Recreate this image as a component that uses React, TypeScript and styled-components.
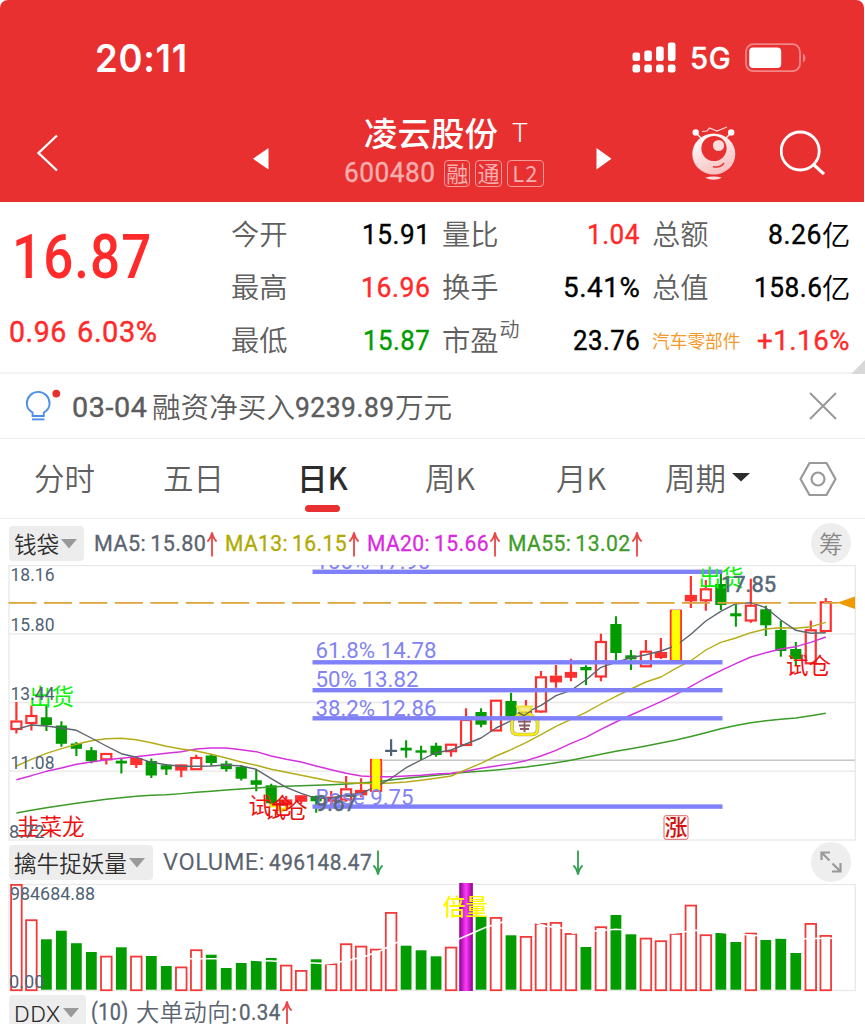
import React, { useLayoutEffect, useRef, useState } from 'react';
import styled, { createGlobalStyle } from 'styled-components';

const GlobalStyle = createGlobalStyle`
  * { box-sizing: border-box; }
  html, body { margin: 0; padding: 0; background: #fff; }
  body { overflow: hidden; font-family: 'Noto Sans CJK SC', sans-serif; }
  svg { display: block; }
`;

const DIN = `Roboto, 'Noto Sans CJK SC', sans-serif`;

/* ---------- text squeezed to the narrow widths of the numeric face ---------- */

const FitBox = styled.span<{ $w: number }>`
  display: inline-block;
  flex: none;
  width: ${(p) => p.$w}px;
  white-space: pre;
`;
const FitInner = styled.span<{ $size: number; $weight: number; $font: string; $color: string }>`
  display: inline-block;
  transform-origin: 0 50%;
  font-family: ${(p) => p.$font};
  font-size: ${(p) => p.$size}px;
  font-weight: ${(p) => p.$weight};
  color: ${(p) => p.$color};
  line-height: 1;
  letter-spacing: 0.02em;
  word-spacing: -0.08em;
  -webkit-text-stroke: ${(p) => (p.$weight === 450 ? p.$size * 0.014 : 0)}px currentColor;
`;

type FitProps = {
  w: number;
  size: number;
  weight?: number;
  font?: string;
  color?: string;
  children: string;
};

function Fit({ w, size, weight = 450, font = DIN, color = 'inherit', children }: FitProps) {
  const ref = useRef<HTMLSpanElement>(null);
  const [scale, setScale] = useState(1);
  useLayoutEffect(() => {
    if (ref.current && ref.current.offsetWidth) setScale(w / ref.current.offsetWidth);
  }, [w, size, children]);
  return (
    <FitBox $w={w}>
      <FitInner
        ref={ref}
        $size={size}
        $weight={weight}
        $font={font}
        $color={color}
        style={{ transform: `scaleX(${scale})` }}
      >
        {children}
      </FitInner>
    </FitBox>
  );
}

/* ---------- page and header ---------- */

const Page = styled.main`
  width: 865px;
  height: 1024px;
  overflow: hidden;
  background: #fff;
`;

const Header = styled.header`
  width: 864.4px;
  height: 202px;
  background: #e83030;
  color: #fff;
  border-radius: 8px 8px 0 0;
`;

const StatusBar = styled.div`
  display: flex;
  justify-content: space-between;
  align-items: center;
  height: 116px;
  padding: 0 58px 0 95px;
`;

const StatusRight = styled.div`
  display: flex;
  align-items: center;
  gap: 14px;
`;

const NavBar = styled.nav`
  display: grid;
  grid-template-columns: 217px 91px 252px 96px 88px 1fr;
  height: 86px;
  padding-left: 36px;
`;

const NavIcon = styled.div<{ $top: number }>`
  padding-top: ${(p) => p.$top}px;
`;

const TitleBlock = styled.div`
  width: 200px;
`;
const TitleLine = styled.div`
  display: flex;
  align-items: flex-start;
  height: 36px;
  padding-left: 20px;
  gap: 14px;
  font-size: 33.5px;
  font-weight: 500;
  line-height: 32px;
`;
const Flag = styled.span`
  display: flex;
  padding-top: 3px;
  font-size: 25px;
  line-height: 1;
`;
const CodeLine = styled.div`
  display: flex;
  align-items: center;
  height: 40px;
  padding-top: 2px;
  color: #f8aeae;
`;
const Tag = styled.span<{ $w: number }>`
  width: ${(p) => p.$w}px;
  height: 27px;
  margin-left: 5px;
  border: 1px solid #f39a9a;
  border-radius: 4px;
  font-size: 22px;
  font-weight: 400;
  line-height: 23px;
  text-align: center;
  letter-spacing: ${(p) => (p.$w > 30 ? 1 : 0)}px;
`;

/* ---------- quote ---------- */

const Quote = styled.section`
  position: relative;
  display: grid;
  grid-template-columns: 231px 199px 12px 198px 12px 198px;
  height: 172px;
  border-bottom: 2px solid #f3f3f3;
`;
const PriceBlock = styled.div`
  color: #ff2a2a;
`;
const BigPrice = styled.div`
  height: 109px;
  padding: 26px 0 0 12px;
`;
const ChangeLine = styled.div`
  display: flex;
  gap: 10px;
  padding: 7px 0 0 9px;
`;
const Stats = styled.div`
  padding-top: 5px;
`;
const Stat = styled.div`
  display: flex;
  justify-content: space-between;
  align-items: center;
  height: 53px;
`;
const StatValue = styled.span<{ $color?: string }>`
  display: flex;
  align-items: center;
  padding-top: 4px;
  color: ${(p) => p.$color || '#000'};
`;
const Unit = styled.span`
  width: 28px;
  margin-top: -3px;
  font-size: 28.3px;
  font-weight: 350;
  line-height: 1;
`;
const StatLabel = styled.span<{ $sector?: boolean }>`
  font-size: ${(p) => (p.$sector ? 17.7 : 28.3)}px;
  font-weight: ${(p) => (p.$sector ? 400 : 350)};
  color: ${(p) => (p.$sector ? '#f49a2c' : '#606060')};
  line-height: 1;
  padding-top: ${(p) => (p.$sector ? 2 : 0)}px;
`;
const Sup = styled.sup`
  font-size: 20px;
  line-height: 0;
  vertical-align: 14px;
  margin-left: 1px;
`;
const Corner = styled.i`
  position: absolute;
  right: 0;
  bottom: -2px;
  border-style: solid;
  border-width: 0 0 14px 14px;
  border-color: transparent transparent #d8d8d8 transparent;
`;

/* ---------- notice and tabs ---------- */

const Notice = styled.section`
  display: flex;
  align-items: center;
  height: 65px;
  padding: 0 28px 0 25px;
  border-bottom: 1px solid #ececec;
  color: #5c5c5c;
`;
const NoticeText = styled.div`
  display: flex;
  align-items: center;
  flex: 1;
  margin-left: 10px;
`;
const NoticeNum = styled.span`
  display: flex;
  padding-top: 3px;
`;
const NoticeCn = styled.span`
  font-size: 28.6px;
  font-weight: 350;
  line-height: 1;
`;

const Tabs = styled.section`
  display: grid;
  grid-template-columns: 129px 135px 127px 131px 109px 134px 1fr;
  align-items: center;
  height: 80px;
  padding-left: 34px;
  border-bottom: 1px solid #ececec;
`;
const Tab = styled.div<{ $active?: boolean }>`
  position: relative;
  display: flex;
  align-items: center;
  width: max-content;
  gap: 6px;
  margin: ${(p) => (p.$active ? '-3px 0 0 -1px' : '-3px 0 0')};
  font-size: 30.5px;
  font-weight: ${(p) => (p.$active ? 500 : 350)};
  color: ${(p) => (p.$active ? '#2c2c2c' : '#606060')};
  line-height: 44px;
  &::after {
    content: '';
    display: ${(p) => (p.$active ? 'block' : 'none')};
    position: absolute;
    left: 8px;
    bottom: -12.5px;
    width: 35px;
    height: 7px;
    border-radius: 4px;
    background: #e83030;
  }
`;

/* ---------- indicator bars ---------- */

const Bar = styled.div<{ $h: number; $top: number }>`
  display: flex;
  align-items: flex-start;
  height: ${(p) => p.$h}px;
  padding: ${(p) => p.$top}px 14px 0 9px;
`;
const Pill = styled.div<{ $w: number }>`
  display: flex;
  align-items: center;
  flex: none;
  gap: 2px;
  width: ${(p) => p.$w}px;
  height: 35px;
  padding-left: 5px;
  border-radius: 4px;
  background: #ededed;
  color: #2d2d2d;
  font-size: 22.6px;
  font-weight: 350;
  line-height: 34px;
  white-space: nowrap;
`;
const Readings = styled.div<{ $gap: number; $left?: number }>`
  display: flex;
  align-items: center;
  flex: 1;
  height: 36px;
  margin-left: ${(p) => p.$left ?? 10}px;
  gap: ${(p) => p.$gap}px;
`;
const Reading = styled.div<{ $color: string }>`
  display: flex;
  align-items: center;
  color: ${(p) => p.$color};
`;
const Round = styled.div`
  display: flex;
  align-items: center;
  justify-content: center;
  width: 40px;
  height: 40px;
  margin-top: -3px;
  border-radius: 50%;
  background: #eee;
  color: #888;
  font-size: 24px;
  font-weight: 350;
  line-height: 1;
`;
const Spacer = styled.span<{ $w: number }>`
  width: ${(p) => p.$w}px;
`;

function Caret({ color, w = 16, h = 10 }: { color: string; w?: number; h?: number }) {
  return (
    <svg width={w} height={h} viewBox="0 0 16 10" preserveAspectRatio="none">
      <path d="M0 0H16L8 9.5Z" fill={color} />
    </svg>
  );
}

function Arrow({ up }: { up?: boolean }) {
  return (
    <svg width="12" height="26" viewBox="0 0 12 26">
      <g
        fill="none"
        stroke={up ? '#e94545' : '#2f9e4f'}
        strokeWidth="1.8"
        transform={up ? undefined : 'rotate(180 6 13)'}
      >
        <path d="M6 2V25.5" />
        <path d="M1.4 10.5Q4.8 7.5 6 1.5Q7.2 7.5 10.6 10.5" />
      </g>
    </svg>
  );
}

/* ---------- candle data ---------- */

const X0 = 16.4;
const STEP = 14.988;
const cx = (i: number) => X0 + STEP * i;

type Kind = 'r' | 'g' | 'y' | 'x';
type Candle = [Kind, number, number, number, number];

// kind, high, body top, body bottom, low
const candles: Candle[] = [
  ['r', 702, 720.5, 729, 733.5], ['r', 705.5, 715, 723, 730.5], ['g', 705.5, 717.3, 725, 731],
  ['g', 721.3, 725.5, 743.8, 746.7], ['g', 742, 743.5, 748.8, 756], ['g', 747, 750.2, 761.2, 763.3],
  ['r', 753, 753, 759.3, 764.5], ['g', 759, 760.7, 763.5, 773.5], ['r', 757, 758, 764, 768],
  ['g', 758.5, 761, 775.5, 778], ['g', 764, 765.2, 769.5, 775], ['r', 764, 764.5, 769.5, 777.3],
  ['r', 754.8, 757, 769.2, 770], ['g', 754.3, 755.5, 763, 765.7], ['g', 760.7, 763.5, 769.2, 771.7],
  ['g', 765, 767, 778.7, 780.5], ['g', 770, 780.3, 784.8, 791.3], ['g', 783.7, 785.3, 803.3, 804.5],
  ['r', 796, 799.5, 804.5, 808], ['r', 795, 795.3, 800.7, 804], ['g', 795.5, 796, 801.3, 812.7],
  ['r', 791, 796.7, 800.7, 805], ['r', 776, 788.3, 799.5, 801.7], ['r', 778.3, 790, 794.3, 797.3],
  ['y', 759.3, 759.3, 790.5, 790.5], ['x', 739.3, 749.8, 751.8, 756], ['g', 740.3, 747.7, 750.5, 757.7],
  ['g', 745.7, 750.3, 752.7, 760], ['g', 742.7, 745.7, 755, 756.7], ['r', 743.7, 743.7, 751.2, 756.7],
  ['r', 708.3, 719, 745, 745], ['g', 708.3, 712, 724.7, 727.3], ['r', 699.7, 699.7, 730.5, 730.5],
  ['g', 692.7, 701, 716.7, 716.7], ['r', 700, 711, 716, 718], ['r', 671, 676.3, 711.5, 712.7],
  ['r', 665, 675.7, 681.3, 687.7], ['r', 658.7, 672, 676.7, 681.3], ['g', 665.3, 667, 670.3, 685],
  ['r', 633.7, 641, 676.5, 681.3], ['g', 616.3, 624, 653, 660], ['g', 650, 655.3, 659.3, 670],
  ['r', 640, 650.7, 666.3, 666.7], ['r', 638, 652, 657, 659], ['y', 610, 610, 660, 660],
  ['r', 576, 595, 600.3, 608], ['r', 580, 588.3, 600.3, 610.7], ['g', 573.3, 584, 605, 610],
  ['g', 604.3, 613.3, 616.3, 626.7], ['r', 578.7, 604.7, 620.5, 622.7], ['g', 605.7, 609.3, 625.3, 636],
  ['g', 620.7, 630, 651, 656.7], ['g', 642, 649, 659, 665], ['r', 620.7, 629.3, 663.3, 664],
  ['r', 598, 601.3, 631, 631.7],
];

const ma5 = [
  729.3, 725, 726, 728, 730.3, 738, 746, 753.7, 757.3, 762.3, 764.7, 766.3, 766.3, 766, 765, 766,
  769.3, 778.7, 787.3, 793.3, 798.3, 798.3, 795, 793.3, 786.7, 778.3, 767.7, 760, 752.7, 750, 744,
  738, 728, 720.7, 712.7, 705.3, 695.7, 690.3, 680, 667.3, 662.3, 657.7, 654.7, 651, 645.7, 634.3,
  621, 611.3, 603.7, 602.7, 607.7, 620, 630.3, 633.3, 632.7,
];
const ma13 = [
  766, 759.3, 753.3, 748.7, 744.3, 740.7, 738.7, 738.3, 739.7, 742.7, 746.3, 749, 751, 754.3, 758,
  762, 765.3, 769.3, 772.3, 775.3, 778.3, 781.3, 782.7, 783.3, 783.7, 783, 782, 780.3, 778.3, 776,
  769.7, 763.3, 756, 749.7, 742.7, 734.7, 726.3, 719.3, 712.3, 704, 696.3, 689, 682, 677, 668.3,
  660.7, 650, 642.3, 638, 632.7, 629, 627.7, 628.3, 626.7, 622.3,
];
const ma20 = [
  779.7, 775.7, 771.3, 768, 764.3, 762, 759.7, 758.3, 756.7, 755, 753.3, 751.7, 749, 748, 748, 749.7,
  751.7, 756, 759.3, 762, 766, 769.7, 773.3, 776, 776.7, 776.7, 776, 775.3, 774, 773.3, 771.3, 768.3,
  766, 763.7, 760.7, 756, 750.3, 743.3, 737.3, 729.3, 722, 715, 708.3, 701.7, 694.3, 686.3, 678,
  670.7, 663.7, 657, 652.7, 649, 646.7, 642.3, 637,
];
const ma55 = [
  813, 810.3, 807.7, 805.5, 803.3, 801.3, 799.3, 797.7, 796.3, 795.3, 794.7, 793.6, 792.3, 791.2, 790,
  789, 788, 787, 786.3, 785.8, 785.3, 784.7, 784, 783, 781.7, 780, 778.3, 776.7, 775.3, 773.7, 772.3,
  771.2, 770, 768.5, 767, 765, 762.7, 760.3, 757.3, 754.3, 751.3, 748.7, 746, 743, 740, 736.5, 732.7,
  728.7, 725.5, 722.7, 720.7, 719.3, 718, 715.8, 713.3,
];
const path = (ys: number[]) => ys.map((y, i) => `${cx(i).toFixed(1)},${y}`).join(' ');

const RED = '#ff3030';
const GREEN = '#029c02';
const SLATE = '#4f6274';

function CandleMark({ i, c }: { i: number; c: Candle }) {
  const [kind, hi, top, bot, lo] = c;
  const x = cx(i);
  if (kind === 'x') {
    return (
      <path d={`M${x} ${hi}V${lo}M${x - 6} 750.8H${x + 6}`} stroke={SLATE} strokeWidth="2.2" fill="none" />
    );
  }
  if (kind === 'y') {
    return (
      <g>
        <rect x={x - 5.2} y={top + 0.5} width="10.4" height={bot - top} fill="#ff0" stroke={RED} strokeWidth="1.8" />
        <rect x={x - 3.9} y={top} width="7.8" height={bot - top} fill="#ff0" />
      </g>
    );
  }
  if (kind === 'g') {
    return (
      <g fill={GREEN}>
        <rect x={x - 1} y={hi} width="2.1" height={lo - hi} />
        <rect x={x - 5.6} y={top} width="11.2" height={bot - top} />
      </g>
    );
  }
  const solid = bot - top < 6.2;
  return (
    <g>
      <path d={`M${x} ${hi}V${top}M${x} ${bot}V${lo}`} stroke={RED} strokeWidth="2.2" />
      <rect
        x={x - 5}
        y={top + 1}
        width="10"
        height={Math.max(1, bot - top - 1)}
        fill={solid ? RED : '#fff'}
        stroke={RED}
        strokeWidth="2.2"
      />
    </g>
  );
}

type LabelProps = {
  x: number;
  y: number;
  w: number;
  size: number;
  fill: string;
  weight?: number;
  cn?: boolean;
  bold?: boolean;
  children: string;
};
function Label({ x, y, w, size, fill, weight = 400, cn, bold, children }: LabelProps) {
  return (
    <text
      x={x}
      y={y}
      fontSize={size}
      fontWeight={weight}
      fill={fill}
      stroke={bold ? fill : 'none'}
      strokeWidth={bold ? 0.5 : 0}
      textLength={w}
      lengthAdjust="spacingAndGlyphs"
      fontFamily={cn ? "'Noto Sans CJK SC', sans-serif" : 'Roboto, sans-serif'}
    >
      {children}
    </text>
  );
}

function PriceChart() {
  const fib: [number, string, number, number][] = [
    [571.8, '100% 17.90', 569.3, 115],
    [662.3, '61.8% 14.78', 658.3, 121],
    [690.2, '50% 13.82', 687, 103],
    [718.3, '38.2% 12.86', 716, 121],
    [806.6, 'Base 9.75', 804.8, 98],
  ];
  return (
    <svg width="865" height="276" viewBox="0 565 865 276">
      <g fill="none" stroke="#e8e8e8" strokeWidth="1.3">
        <rect x="9" y="565.6" width="846.3" height="274.4" />
        <path d="M9 633.8H855M9 702.5H855M9 771.2H855" />
      </g>
      <path d="M383 760.3H855" stroke="#c6c6c6" strokeWidth="1.6" />
      {candles.map((c, i) => (
        <CandleMark key={i} i={i} c={c} />
      ))}
      <g fill="none" strokeWidth="1.4" strokeLinejoin="round">
        <polyline points={path(ma55)} stroke="#3c9a28" />
        <polyline points={path(ma20)} stroke="#d431dc" />
        <polyline points={path(ma13)} stroke="#b4ac16" />
        <polyline points={path(ma5)} stroke="#5d646e" />
      </g>
      {candles.map((c, i) =>
        c[0] === 'y' ? <rect key={i} x={cx(i) - 3.9} y={c[2]} width="7.8" height={c[3] - c[2]} fill="#ff0" /> : null,
      )}
      <path d="M8.5 602.8H838" stroke="#dba23a" strokeWidth="1.7" strokeDasharray="28 7.45" />
      <path d="M837 602.8L855 596.5V609Z" fill="#f09a00" />

      {/* money bag marker */}
      <g fill="none">
        <path d="M517 706.5H532L529 712H520Z" fill="#f6ee8c" stroke="#ece33a" strokeWidth="2" />
        <path
          d="M519 714H530L537.5 721V729Q537.5 734.5 532 734.5H517.5Q512 734.5 512 729V721Z"
          fill="#fff"
          stroke="#a9a07c"
          strokeWidth="3.6"
        />
        <path
          d="M519 714H530L537.5 721V729Q537.5 734.5 532 734.5H517.5Q512 734.5 512 729V721Z"
          stroke="#f8ee10"
          strokeWidth="2.4"
        />
        <path d="M518 712.5L524 715.5L531 711" stroke="#6b6a3c" strokeWidth="1.4" />
        <path d="M518 721.5H531M519 725.5H530M520 729H529M524.5 720V732" stroke="#8a5a5e" strokeWidth="1.8" />
      </g>
      <path d="M269 805.5H277L282 810.5L289 806.5" stroke="#ffe600" strokeWidth="3.6" fill="none" />

      <g>
        {fib.map(([y, text, base, w]) => (
          <g key={text}>
            <rect x="312.5" y={y - 2.2} width="410" height="4.4" fill="#8080fa" />
            <Label x={315.5} y={base} w={w} size={22.3} fill="#8282f2">
              {text}
            </Label>
          </g>
        ))}
      </g>

      <Label x={29} y={705} w={45} size={22.5} fill="#0cf00c" cn>出货</Label>
      <Label x={698.5} y={585.5} w={45} size={22.5} fill="#0cf00c" cn>出货</Label>
      <Label x={248.5} y={813.5} w={45} size={22.5} fill="#f01212" cn>试仓</Label>
      <Label x={264.5} y={817.5} w={43} size={22} fill="#e01212" cn>试仓</Label>
      <Label x={786} y={674} w={45} size={22.5} fill="#f01212" cn>试仓</Label>
      <Label x={17} y={835} w={67.5} size={22.5} fill="#f01212" cn>韭菜龙</Label>

      <Label x={10.5} y={580.8} w={44} size={17.7} fill={SLATE}>18.16</Label>
      <Label x={10.5} y={631.4} w={44} size={17.7} fill={SLATE}>15.80</Label>
      <Label x={10.5} y={700.2} w={44} size={17.7} fill={SLATE}>13.44</Label>
      <Label x={10.5} y={769} w={44} size={17.7} fill={SLATE}>11.08</Label>
      <Label x={9} y={837.5} w={35.5} size={17.7} fill={SLATE}>8.72</Label>
      <Label x={721} y={591.5} w={55} size={21.5} fill="#566879" bold>17.85</Label>
      <Label x={315.5} y={810.7} w={41} size={21.5} fill="#566879" bold>9.67</Label>

      <rect x="664" y="815.7" width="24" height="23.6" rx="2" fill="#fff" stroke="#d66" />
      <Label x={664.5} y={835.3} w={23} size={22} fill="#d21414" weight={500} cn>涨</Label>
    </svg>
  );
}

const volumes: [Kind, number][] = [
  ['r', 884], ['r', 919.3], ['g', 939.3], ['g', 930.7], ['g', 943.2], ['g', 952], ['r', 955.7],
  ['g', 947.3], ['r', 955.7], ['g', 956], ['g', 966], ['r', 966.5], ['r', 949.3], ['g', 954.7],
  ['g', 968], ['g', 963], ['g', 960.3], ['g', 958], ['r', 964.7], ['r', 970], ['g', 959.3],
  ['r', 963.3], ['r', 943.3], ['r', 945.7], ['r', 948.7], ['r', 912], ['g', 945.7], ['g', 950.3],
  ['g', 956.3], ['r', 946.7], ['x', 883], ['g', 916.3], ['r', 917], ['g', 935.3], ['r', 936],
  ['r', 923], ['r', 922], ['r', 933], ['g', 947], ['r', 926.3], ['g', 915], ['g', 934.3], ['r', 937.7],
  ['r', 940.3], ['r', 933], ['r', 904.7], ['r', 934.3], ['g', 933], ['g', 942], ['r', 932.7],
  ['g', 940], ['g', 938.7], ['g', 953], ['r', 923], ['r', 935],
];

function VolumeChart() {
  return (
    <svg width="865" height="109" viewBox="0 883 865 109">
      <defs>
        <linearGradient id="beam">
          <stop offset="0" stopColor="#8a008a" />
          <stop offset="0.5" stopColor="#ff3cff" />
          <stop offset="1" stopColor="#8a008a" />
        </linearGradient>
      </defs>
      <rect x="9" y="884.5" width="846.3" height="106" fill="none" stroke="#e8e8e8" strokeWidth="1.3" />
      {volumes.map(([k, y], i) => {
        const x = cx(i);
        if (k === 'x') return <rect key={i} x={x - 6.8} y="883" width="13.6" height="108" fill="url(#beam)" />;
        if (k === 'g') return <rect key={i} x={x - 5.4} y={y} width="10.8" height={989.7 - y} fill={GREEN} />;
        return (
          <rect key={i} x={x - 5.3} y={y + 0.9} width="10.6" height={989.3 - y} fill="none" stroke="#f23a3a" strokeWidth="1.8" />
        );
      })}
      <polyline
        points="190,958.7 217,958.7 267,960.7 310,962.7 327,963.7 347,960.7 367,955.7 382,950 397,942.3 430,944 459,939 486,927.3 502,922.3 536,922.7 546,926.3 563,928.3 573,933.3 595,931 616,929.3 640,931 673,933.3 696,930.3 790,938.5 805,938.7 832,938.3"
        fill="none"
        stroke="#fff"
        strokeWidth="1.5"
      />
      <Label x={10} y={900} w={85} size={17.7} fill={SLATE}>984684.88</Label>
      <Label x={9} y={988} w={35.5} size={17.7} fill={SLATE}>0.00</Label>
      <Label x={443} y={914.8} w={45} size={22.5} fill="#fff600" weight={500} cn>倍量</Label>
    </svg>
  );
}

/* ---------- icons ---------- */

const Signal = () => (
  <svg width="44" height="32" viewBox="0 0 44 32" fill="#fff">
    {[0, 1, 2, 3].map((i) => (
      <g key={i}>
        <rect x={0.5 + i * 11.8} y={10.5 - [0, 2, 6, 10][i]} width="7.6" height={8.5 + [0, 2, 6, 10][i]} rx="2.3" />
        <rect x={0.5 + i * 11.8} y="22.5" width="7.6" height="8" rx="2.3" />
      </g>
    ))}
  </svg>
);

const Battery = () => (
  <svg width="61" height="30" viewBox="0 0 61 30">
    <rect x="1" y="1.2" width="54" height="27" rx="7.5" fill="none" stroke="#f28585" strokeWidth="1.8" />
    <rect x="4.2" y="4.6" width="32" height="20.4" rx="4" fill="#fff" />
    <path d="M58 10.5Q60.5 12 60.5 15T58 19.5Z" fill="#f28585" />
  </svg>
);

const Robot = () => (
  <svg width="46" height="56" viewBox="0 0 46 56">
    <defs>
      <linearGradient id="head" x1="0.2" y1="0" x2="0.7" y2="1">
        <stop offset="0" stopColor="#fff" />
        <stop offset="1" stopColor="#fbbcbc" />
      </linearGradient>
    </defs>
    <path d="M10 5.5L15 5L17.5 2L25 5L35 1" fill="none" stroke="#fbdada" strokeWidth="1.2" />
    <path d="M4 7L9 12M39 7L34 12" stroke="#fff" strokeWidth="1.4" />
    <circle cx="3.7" cy="6.4" r="3.2" fill="#fff" />
    <circle cx="39.2" cy="6.4" r="3.2" fill="#fff" />
    <ellipse cx="21.8" cy="28" rx="21.5" ry="20.6" fill="url(#head)" />
    <circle cx="22" cy="22.5" r="12.6" fill="#e83030" />
    <circle cx="26.5" cy="19.5" r="5.6" fill="#fdd" />
    <path d="M21 40.5Q28 42.5 32 37" fill="none" stroke="#e83030" strokeWidth="1.4" />
    <path d="M13 51.8Q21.5 49.3 30 51.8Q21.5 55.6 13 51.8Z" fill="#fdd" />
  </svg>
);

const Search = () => (
  <svg width="48" height="48" viewBox="0 0 48 48" fill="none" stroke="#fff" strokeWidth="2.8">
    <circle cx="20.2" cy="21" r="19" />
    <path d="M33 34L44 44.2" strokeWidth="3.2" />
  </svg>
);

const Bulb = () => (
  <svg width="37" height="34" viewBox="0 0 37 34">
    <g fill="none" stroke="#4a90e8" strokeWidth="1.9">
      <path d="M7.6 27V23.6Q1.8 20.5 1.8 14.3A11.4 11.4 0 0 1 24.6 14.3Q24.6 20.5 18.8 23.6V27Z" />
      <path d="M7 30.4H19.4" />
    </g>
    <circle cx="31.3" cy="4.6" r="3.9" fill="#e8302c" />
  </svg>
);

const Close = () => (
  <svg width="28" height="28" viewBox="0 0 28 28" stroke="#999" strokeWidth="2">
    <path d="M1 1L27 27M27 1L1 27" />
  </svg>
);

const Hex = () => (
  <svg width="38" height="36" viewBox="0 0 38 36" fill="none" stroke="#999" strokeWidth="2.2">
    <path d="M10.5 2H27.5L36.5 18L27.5 34H10.5L1.5 18Z" strokeLinejoin="round" />
    <circle cx="19" cy="18" r="6.5" />
  </svg>
);

const Expand = () => (
  <svg width="22" height="22" viewBox="0 0 22 22" fill="none" stroke="#999" strokeWidth="2.2">
    <path d="M1.5 9V1.5H10M1.5 1.5L9.5 9.5M12.5 12.5L20.5 20.5M20.5 12V20.5H12" />
  </svg>
);

type StatItem = { label: string; sup?: string; value: string; w: number; unit?: string; color?: string; sector?: boolean };

const UP = '#ff2a2a';
const columns: StatItem[][] = [
  [
    { label: '今开', value: '15.91', w: 68 },
    { label: '最高', value: '16.96', w: 69, color: UP },
    { label: '最低', value: '15.87', w: 67, color: '#029c02' },
  ],
  [
    { label: '量比', value: '1.04', w: 53, color: UP },
    { label: '换手', value: '5.41%', w: 77 },
    { label: '市盈', sup: '动', value: '23.76', w: 67 },
  ],
  [
    { label: '总额', value: '8.26', w: 54, unit: '亿' },
    { label: '总值', value: '158.6', w: 68, unit: '亿' },
    { label: '汽车零部件', value: '+1.16%', w: 93, color: UP, sector: true },
  ],
];

function StatColumn({ items }: { items: StatItem[] }) {
  return (
    <Stats>
      {items.map((s) => (
        <Stat key={s.label}>
          <StatLabel $sector={s.sector}>
            {s.label}
            {s.sup && <Sup>{s.sup}</Sup>}
          </StatLabel>
          <StatValue $color={s.color}>
            <Fit w={s.w} size={28.5}>{s.value}</Fit>
            {s.unit && <Unit>{s.unit}</Unit>}
          </StatValue>
        </Stat>
      ))}
    </Stats>
  );
}

export default function App() {
  return (
    <>
      <GlobalStyle />
      <Page>
        <Header>
          <StatusBar>
            <Fit w={93} size={38} weight={600} font="Inter, sans-serif">20:11</Fit>
            <StatusRight>
              <Signal />
              <Fit w={41} size={30} font="Inter, sans-serif">5G</Fit>
              <Battery />
            </StatusRight>
          </StatusBar>
          <NavBar>
            <NavIcon $top={18}>
              <svg width="24" height="38" viewBox="0 0 24 38">
                <path d="M21 1.5L2.5 19L21 36.5" fill="none" stroke="#fff" strokeWidth="2.3" />
              </svg>
            </NavIcon>
            <NavIcon $top={32}>
              <svg width="16" height="22" viewBox="0 0 16 22">
                <path d="M15.5 0V21.5L0 10.8Z" fill="#fff" />
              </svg>
            </NavIcon>
            <TitleBlock>
              <TitleLine>
                凌云股份
                <Flag>
                  <Fit w={16} size={25} weight={300}>T</Fit>
                </Flag>
              </TitleLine>
              <CodeLine>
                <Fit w={92} size={28.5}>600480</Fit>
                <Spacer $w={3} />
                <Tag $w={27}>融</Tag>
                <Tag $w={27}>通</Tag>
                <Tag $w={38}>L2</Tag>
              </CodeLine>
            </TitleBlock>
            <NavIcon $top={32}>
              <svg width="16" height="22" viewBox="0 0 16 22">
                <path d="M0.5 0V21.5L15.5 10.8Z" fill="#fff" />
              </svg>
            </NavIcon>
            <NavIcon $top={10}>
              <Robot />
            </NavIcon>
            <NavIcon $top={14}>
              <Search />
            </NavIcon>
          </NavBar>
        </Header>

        <Quote>
          <PriceBlock>
            <BigPrice>
              <Fit w={140} size={60.5} weight={500}>16.87</Fit>
            </BigPrice>
            <ChangeLine>
              <Fit w={58} size={29}>0.96</Fit>
              <Fit w={81} size={29}>6.03%</Fit>
            </ChangeLine>
          </PriceBlock>
          <StatColumn items={columns[0]} />
          <span />
          <StatColumn items={columns[1]} />
          <span />
          <StatColumn items={columns[2]} />
          <Corner />
        </Quote>

        <Notice>
          <Bulb />
          <NoticeText>
            <NoticeNum><Fit w={75} size={28}>03-04</Fit></NoticeNum>
            <Spacer $w={5} />
            <NoticeCn>融资净买入</NoticeCn>
            <NoticeNum><Fit w={100} size={28}>9239.89</Fit></NoticeNum>
            <NoticeCn>万元</NoticeCn>
          </NoticeText>
          <Close />
        </Notice>

        <Tabs>
          <Tab>分时</Tab>
          <Tab>五日</Tab>
          <Tab $active>日K</Tab>
          <Tab>周K</Tab>
          <Tab>月K</Tab>
          <Tab>周期<Caret color="#2c2c2c" w={18} h={9} /></Tab>
          <Hex />
        </Tabs>

        <Bar $h={46} $top={7}>
          <Pill $w={75}>钱袋<Caret color="#999" /></Pill>
          <Readings $gap={7}>
            <Reading $color="#5b6470"><Fit w={112} size={22.5}>MA5: 15.80</Fit><Arrow up /></Reading>
            <Reading $color="#b0aa00"><Fit w={122.5} size={22.5}>MA13: 16.15</Fit><Arrow up /></Reading>
            <Reading $color="#d92ae0"><Fit w={122.5} size={22.5}>MA20: 15.66</Fit><Arrow up /></Reading>
            <Reading $color="#3f9c28"><Fit w={123} size={22.5}>MA55: 13.02</Fit><Arrow up /></Reading>
          </Readings>
          <Round>筹</Round>
        </Bar>
        <PriceChart />
        <Bar $h={42} $top={4}>
          <Pill $w={144}>擒牛捉妖量<Caret color="#999" /></Pill>
          <Readings $gap={188}>
            <Reading $color="#5b6470">
              <Fit w={102} size={23} weight={400}>VOLUME:</Fit>
              <Spacer $w={4} />
              <Fit w={103} size={22.5}>496148.47</Fit>
              <Arrow />
            </Reading>
            <Arrow />
          </Readings>
          <Round><Expand /></Round>
        </Bar>
        <VolumeChart />
        <Bar $h={40} $top={3}>
          <Pill $w={77}><Fit w={47} size={21} weight={300} font="Inter, sans-serif">DDX</Fit><Caret color="#999" /></Pill>
          <Readings $gap={0} $left={5}>
            <Reading $color="#5b6470">
              <Fit w={38} size={23}>(10)</Fit>
              <Spacer $w={7} />
              <Fit w={102} size={23.5} weight={350} font="'Noto Sans CJK SC', sans-serif">大单动向:</Fit>
              <Spacer $w={1} />
              <Fit w={42} size={22.5}>0.34</Fit>
              <Arrow up />
            </Reading>
          </Readings>
        </Bar>
      </Page>
    </>
  );
}
